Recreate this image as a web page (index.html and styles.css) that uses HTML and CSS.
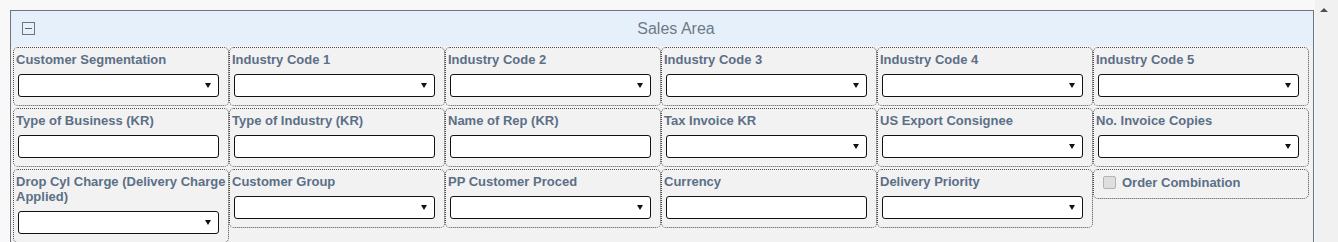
FILE: index.html
```html
<!DOCTYPE html>
<html lang="en">
<head>
    <meta charset="UTF-8">
    <meta name="viewport" content="width=device-width, initial-scale=1.0">
    <title>Sales Area</title>
    <link rel="stylesheet" href="styles.css">
</head>
<body>
    <div class="page">
        <div class="main">
            <div class="panel">
                <div class="panel-head">
                    <span class="toggle"></span>
                    <span class="panel-title">Sales Area</span>
                </div>
                <div class="fields">
                    <!-- Row 1 -->
                    <div class="field">
                        <label for="custSeg">Customer Segmentation</label>
                        <div class="pick"><select id="custSeg"></select></div>
                    </div>
                    <div class="field">
                        <label for="ind1">Industry Code 1</label>
                        <div class="pick"><select id="ind1"></select></div>
                    </div>
                    <div class="field">
                        <label for="ind2">Industry Code 2</label>
                        <div class="pick"><select id="ind2"></select></div>
                    </div>
                    <div class="field">
                        <label for="ind3">Industry Code 3</label>
                        <div class="pick"><select id="ind3"></select></div>
                    </div>
                    <div class="field">
                        <label for="ind4">Industry Code 4</label>
                        <div class="pick"><select id="ind4"></select></div>
                    </div>
                    <div class="field">
                        <label for="ind5">Industry Code 5</label>
                        <div class="pick"><select id="ind5"></select></div>
                    </div>

                    <!-- Row 2 -->
                    <div class="field">
                        <label for="bizType">Type of Business (KR)</label>
                        <input type="text" id="bizType">
                    </div>
                    <div class="field">
                        <label for="indType">Type of Industry (KR)</label>
                        <input type="text" id="indType">
                    </div>
                    <div class="field">
                        <label for="repName">Name of Rep (KR)</label>
                        <input type="text" id="repName">
                    </div>
                    <div class="field">
                        <label for="taxInvoice">Tax Invoice KR</label>
                        <div class="pick"><select id="taxInvoice"></select></div>
                    </div>
                    <div class="field">
                        <label for="exportCons">US Export Consignee</label>
                        <div class="pick"><select id="exportCons"></select></div>
                    </div>
                    <div class="field">
                        <label for="invCopies">No. Invoice Copies</label>
                        <div class="pick"><select id="invCopies"></select></div>
                    </div>

                    <!-- Row 3 -->
                    <div class="field">
                        <label for="dropCyl">Drop Cyl Charge (Delivery Charge Applied)</label>
                        <div class="pick"><select id="dropCyl"></select></div>
                    </div>
                    <div class="field">
                        <label for="custGroup">Customer Group</label>
                        <div class="pick"><select id="custGroup"></select></div>
                    </div>
                    <div class="field">
                        <label for="ppProced">PP Customer Proced</label>
                        <div class="pick"><select id="ppProced"></select></div>
                    </div>
                    <div class="field">
                        <label for="currency">Currency</label>
                        <input type="text" id="currency">
                    </div>
                    <div class="field">
                        <label for="delPriority">Delivery Priority</label>
                        <div class="pick"><select id="delPriority"></select></div>
                    </div>
                    <div class="field check">
                        <input type="checkbox" id="orderComb" disabled>
                        <label for="orderComb">Order Combination</label>
                    </div>
                </div>
            </div>
        </div>
        <div class="scrollbar"><span class="scroll-up"></span></div>
    </div>
</body>
</html>
```

FILE: styles.css
```css
html, body {
    margin: 0;
    padding: 0;
    height: 242px;
    overflow: hidden;
}

body {
    font-family: "Liberation Sans", Arial, sans-serif;
    background: #f8f8f9;
}

.page {
    display: flex;
    height: 242px;
}

.main {
    flex: 1;
    padding: 10px 1px 0 10px;
}

.panel {
    border: 1px solid #6b7683;
    background: #f2f2f2;
    min-height: 300px;
}

.panel-head {
    display: flex;
    align-items: center;
    height: 35px;
    padding-left: 11px;
    background: #e6f0fa;
}

.toggle {
    display: flex;
    align-items: center;
    justify-content: center;
    width: 13px;
    height: 13px;
    box-sizing: border-box;
    border: 1px solid #6b7683;
    margin-right: 4px;
}

.toggle::before {
    content: "";
    width: 7px;
    height: 1px;
    background: #59626d;
}

.panel-title {
    flex: 1;
    text-align: center;
    font-size: 16px;
    color: #6d7a88;
}

.fields {
    display: grid;
    grid-template-columns: repeat(6, 216px);
    row-gap: 2px;
    align-items: start;
    padding: 1px 2px 0;
}

.field {
    border: 1px dotted #4a4a4a;
    border-radius: 5px;
    padding: 4px 2px 8px;
}

.field label {
    display: block;
    font-size: 13px;
    font-weight: bold;
    line-height: 15px;
    color: #5b6f87;
}

.pick {
    position: relative;
    width: 201px;
    margin: 7px 0 0 2px;
}

.pick::after {
    content: "";
    position: absolute;
    right: 8px;
    top: 9px;
    border-left: 3px solid transparent;
    border-right: 3px solid transparent;
    border-top: 5px solid #111;
}

.pick select,
.field input[type="text"] {
    display: block;
    width: 201px;
    height: 23px;
    box-sizing: border-box;
    margin: 0;
    padding: 0 4px;
    border: 1px solid #111;
    border-radius: 3px;
    background: #fff;
    font: 13px "Liberation Sans", Arial, sans-serif;
    appearance: none;
    -webkit-appearance: none;
}

.field input[type="text"] {
    margin: 7px 0 0 2px;
}

.field.check {
    display: flex;
    align-items: center;
    padding: 5px 2px 8px 9px;
}

.field.check input {
    appearance: none;
    -webkit-appearance: none;
    width: 13px;
    height: 13px;
    margin: 0 6px 0 0;
    box-sizing: border-box;
    border: 1px solid #b3b3b3;
    border-radius: 2px;
    background: #dedede;
}

.scrollbar {
    width: 23px;
    background: #f1f1f1;
}

.scroll-up {
    display: block;
    width: 0;
    height: 0;
    margin: 8px 0 0 5px;
    border-left: 4px solid transparent;
    border-right: 4px solid transparent;
    border-bottom: 4px solid #505050;
}
```
